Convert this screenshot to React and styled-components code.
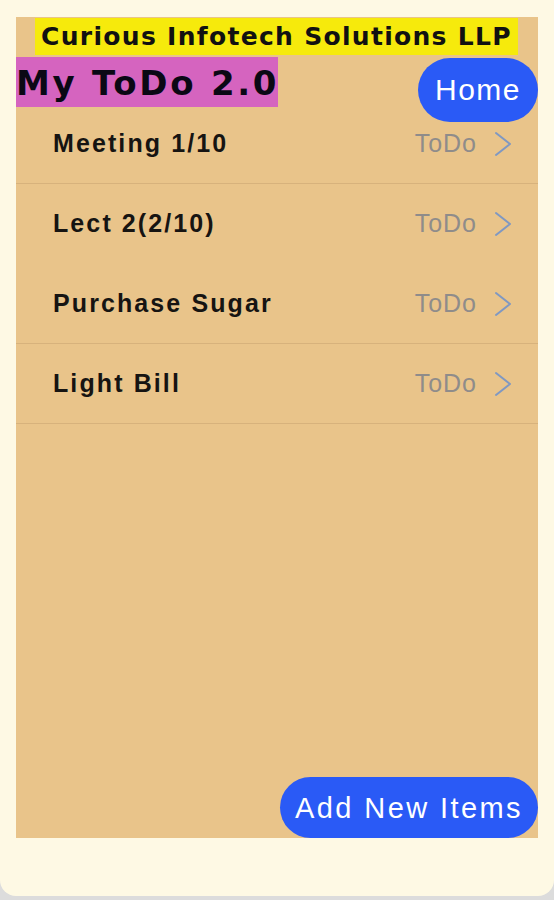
import React from "react"
import styled, { createGlobalStyle } from "styled-components"

const GlobalStyle = createGlobalStyle`
  html, body {
    margin: 0;
    padding: 0;
    background: #dcdcdc;
  }
  body {
    font-family: "Liberation Sans", Arial, sans-serif;
  }
`

const items = [
  { title: "Meeting 1/10", divider: true },
  { title: "Lect 2(2/10)", divider: false },
  { title: "Purchase Sugar", divider: true },
  { title: "Light Bill", divider: true },
]

const Screen = styled.div`
  width: 554px;
  height: 896px;
  box-sizing: border-box;
  padding: 17px 16px 0 16px;
  background: #fef9e4;
  border-radius: 0 0 16px 16px;
`

const Panel = styled.div`
  height: 821px;
  background: #e9c48a;
  display: flex;
  flex-direction: column;
`

const Banner = styled.div`
  margin: 1px 0 0 19px;
  width: 483px;
  height: 37px;
  background: #f6ea0c;
  color: #111;
  font-family: "DejaVu Sans", sans-serif;
  font-weight: bold;
  font-size: 25px;
  letter-spacing: 1.3px;
  display: flex;
  align-items: center;
  justify-content: center;
  white-space: nowrap;
`

const Header = styled.div`
  margin-top: 2px;
  height: 47px;
  display: flex;
  justify-content: space-between;
  align-items: flex-start;
`

const Title = styled.h1`
  margin: 0;
  width: 262px;
  height: 50px;
  background: #d564bf;
  color: #0a0814;
  font-family: "DejaVu Sans", sans-serif;
  font-weight: bold;
  font-size: 34px;
  letter-spacing: 2.7px;
  line-height: 52px;
  white-space: nowrap;
`

const PillButton = styled.button`
  border: none;
  background: #2a5af6;
  color: #fff;
  font-family: "Liberation Sans", Arial, sans-serif;
  font-size: ${(p) => p.size}px;
  letter-spacing: ${(p) => p.spacing}px;
  border-radius: 999px;
  padding: 0;
  cursor: pointer;
`

const HomeButton = styled(PillButton)`
  margin-top: 1px;
  width: 120px;
  height: 64px;
`

const List = styled.ul`
  list-style: none;
  margin: 0;
  padding: 0;
`

const Row = styled.li`
  height: 80px;
  box-sizing: border-box;
  display: flex;
  align-items: center;
  padding: 0 26px 0 37px;
  border-bottom: 1px solid ${(p) => (p.divider ? "#d7b27c" : "transparent")};
`

const ItemTitle = styled.span`
  flex: 1;
  color: #161412;
  font-weight: bold;
  font-size: 25px;
  letter-spacing: 2.1px;
`

const Status = styled.span`
  color: #8f8c8a;
  font-size: 25px;
  letter-spacing: 1px;
  margin-right: 17px;
`

const Chevron = () => (
  <svg width="18" height="26" viewBox="0 0 18 26" fill="none">
    <polyline
      points="2,2 16,13 2,24"
      stroke="#7f98c2"
      strokeWidth="2"
      strokeLinecap="round"
      strokeLinejoin="round"
    />
  </svg>
)

const Footer = styled.div`
  margin-top: auto;
  display: flex;
  justify-content: flex-end;
`

const AddButton = styled(PillButton)`
  width: 258px;
  height: 61px;
  padding-top: 2px;
`

export default function App() {
  return (
    <>
      <GlobalStyle />
      <Screen>
        <Panel>
          <Banner>Curious Infotech Solutions LLP</Banner>
          <Header>
            <Title>My ToDo 2.0</Title>
            <HomeButton size={30} spacing={1.5}>
              Home
            </HomeButton>
          </Header>
          <List>
            {items.map((item) => (
              <Row key={item.title} divider={item.divider}>
                <ItemTitle>{item.title}</ItemTitle>
                <Status>ToDo</Status>
                <Chevron />
              </Row>
            ))}
          </List>
          <Footer>
            <AddButton size={29} spacing={2.4}>
              Add New Items
            </AddButton>
          </Footer>
        </Panel>
      </Screen>
    </>
  )
}
